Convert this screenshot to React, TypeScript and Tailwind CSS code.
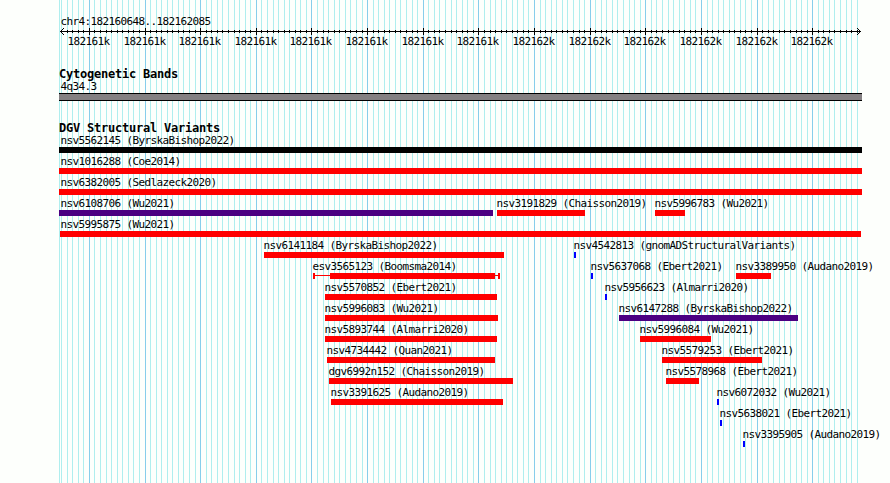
const MAJOR = 55.64;
const ORIGIN = 88.9;

const tickX = (i: number) => Math.round(ORIGIN + (i * MAJOR) / 10);
const ticks = Array.from({ length: 144 }, (_, n) => n - 5).map((i) => ({
  x: tickX(i),
  major: i % 10 === 0,
}));

type Feature = { label: string; from: number; to: number; color?: string; whiskers?: [number, number] };

const RED = "bg-[#ff0000]";
const INDIGO = "bg-[#4b0082]";
const BLUE = "bg-[#0000ff]";

const rows: Feature[][] = [
  [{ label: "nsv5562145 (ByrskaBishop2022)", from: 59, to: 862, color: "bg-black" }],
  [{ label: "nsv1016288 (Coe2014)", from: 59, to: 862 }],
  [{ label: "nsv6382005 (Sedlazeck2020)", from: 59, to: 862 }],
  [
    { label: "nsv6108706 (Wu2021)", from: 59, to: 493, color: INDIGO },
    { label: "nsv3191829 (Chaisson2019)", from: 497, to: 585 },
    { label: "nsv5996783 (Wu2021)", from: 655, to: 685 },
  ],
  [{ label: "nsv5995875 (Wu2021)", from: 60, to: 861 }],
  [
    { label: "nsv6141184 (ByrskaBishop2022)", from: 264, to: 504 },
    { label: "nsv4542813 (gnomADStructuralVariants)", from: 574, to: 576, color: BLUE },
  ],
  [
    { label: "esv3565123 (Boomsma2014)", from: 313, to: 500, whiskers: [17, 5] },
    { label: "nsv5637068 (Ebert2021)", from: 591, to: 593, color: BLUE },
    { label: "nsv3389950 (Audano2019)", from: 736, to: 771 },
  ],
  [
    { label: "nsv5570852 (Ebert2021)", from: 325, to: 497 },
    { label: "nsv5956623 (Almarri2020)", from: 605, to: 607, color: BLUE },
  ],
  [
    { label: "nsv5996083 (Wu2021)", from: 325, to: 498 },
    { label: "nsv6147288 (ByrskaBishop2022)", from: 619, to: 798, color: INDIGO },
  ],
  [
    { label: "nsv5893744 (Almarri2020)", from: 325, to: 497 },
    { label: "nsv5996084 (Wu2021)", from: 640, to: 711 },
  ],
  [
    { label: "nsv4734442 (Quan2021)", from: 327, to: 495 },
    { label: "nsv5579253 (Ebert2021)", from: 662, to: 762 },
  ],
  [
    { label: "dgv6992n152 (Chaisson2019)", from: 329, to: 513 },
    { label: "nsv5578968 (Ebert2021)", from: 666, to: 699 },
  ],
  [
    { label: "nsv3391625 (Audano2019)", from: 331, to: 503 },
    { label: "nsv6072032 (Wu2021)", from: 717, to: 719, color: BLUE },
  ],
  [{ label: "nsv5638021 (Ebert2021)", from: 720, to: 722, color: BLUE }],
  [{ label: "nsv3395905 (Audano2019)", from: 743, to: 745, color: BLUE }],
];

function GridLines() {
  return (
    <svg className="absolute inset-0" width="890" height="483" shapeRendering="crispEdges">
      <rect x="59" y="0" width="1" height="483" fill="#afeeee" />
      {ticks.map((t) => (
        <rect key={t.x} x={t.x} y="0" width="1" height="483" fill={t.major ? "#87ceeb" : "#afeeee"} />
      ))}
    </svg>
  );
}

function Ruler() {
  return (
    <svg className="block" width="890" height="22" shapeRendering="crispEdges">
      <rect x="60" y="5" width="801" height="1" />
      {ticks.map((t) => (
        <rect key={t.x} x={t.x} y={t.major ? 2 : 4} width="1" height={t.major ? 7 : 3} />
      ))}
      <path
        d="M64 2h-1v1h-1v1h-1v1h-1v1h1v1h1v1h1v1h1v-1h-1v-1h-1v-1h-1v-1h1v-1h1v-1h1z M857 2h1v1h1v1h1v1h1v1h-1v1h-1v1h-1v1h-1v-1h1v-1h1v-1h1v-1h-1v-1h-1v-1h-1z"
      />
      {ticks
        .filter((t) => t.major)
        .map((t, n) => (
          <text key={t.x} x={t.x - 21.6} y="19" textRendering="geometricPrecision">
            {n < 8 ? "182161k" : "182162k"}
          </text>
        ))}
    </svg>
  );
}

function FeatureBar({ f }: { f: Feature }) {
  const nudge = f.from <= 60 ? 60.4 - f.from : -0.6;
  return (
    <div className="col-start-1 row-start-1 w-0 whitespace-nowrap" style={{ marginLeft: f.from }}>
      <div className="h-[15px] leading-[17px]" style={{ marginLeft: nudge }}>
        {f.label}
      </div>
      {f.whiskers ? (
        <div className="flex h-1.5 items-center" style={{ width: f.to - f.from }}>
          <div className="h-1.5 w-0.5 bg-[#ff0000]" />
          <div className="mb-px h-px bg-[#ff0000]" style={{ width: f.whiskers[0] - 2 }} />
          <div className="h-1.5 flex-1 bg-[#ff0000]" />
          <div className="mb-px h-px bg-[#ff0000]" style={{ width: f.whiskers[1] - 2 }} />
          <div className="h-1.5 w-0.5 bg-[#ff0000]" />
        </div>
      ) : (
        <div className={"h-1.5 " + (f.color ?? RED)} style={{ width: f.to - f.from }} />
      )}
    </div>
  );
}

export default function App() {
  return (
    <div className="relative h-[483px] w-[890px] overflow-hidden bg-[#fdfffc] font-['DejaVu_Sans_Mono',monospace] text-[11px] tracking-[-0.62px] text-black">
      <GridLines />
      <main className="relative flex flex-col pt-[13px]">
        <div className="h-[13px] pl-[60.4px] leading-[17px]">chr4:182160648..182162085</div>
        <Ruler />
        <h2 className="mt-[18px] h-3 pl-[59px] text-[12px] leading-[17px] font-bold tracking-[-0.22px]">
          Cytogenetic Bands
        </h2>
        <div className="h-[15px] pl-[60.4px] leading-[17px]">4q34.3</div>
        <div className="ml-[59px] h-2 w-[803px] border-y border-black bg-[#848082]" />
        <h2 className="mt-[19px] h-3 pl-[59px] text-[12px] leading-[17px] font-bold tracking-[-0.22px]">
          DGV Structural Variants
        </h2>
        {rows.map((row, i) => (
          <div key={i} className="grid h-[21px] grid-cols-1">
            {row.map((f) => (
              <FeatureBar key={f.label} f={f} />
            ))}
          </div>
        ))}
      </main>
    </div>
  );
}
